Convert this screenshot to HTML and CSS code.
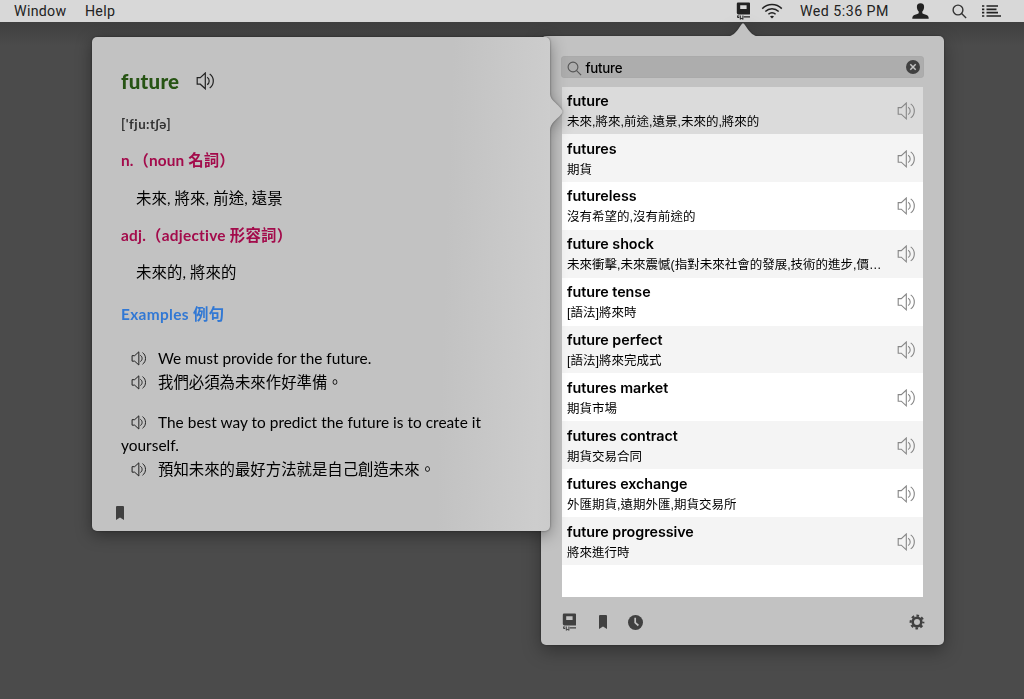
FILE: index.html
```html
<!DOCTYPE html>
<html lang="zh-Hant">
<head>
<meta charset="utf-8">
<title>Dictionary</title>
<link rel="stylesheet" href="styles.css">
</head>
<body>
<svg class="defs" aria-hidden="true">
  <symbol id="speaker" viewBox="0 0 18 18">
    <path d="M.7 5.600h3.100l5-4.600v15.800l-5-4.600H.7z"/>
    <path d="M10.600 5.200c2.800 1.500 2.800 5.900 0 7.400M13.200 1.900c4.800 3.200 4.800 10.800 0 14"/>
  </symbol>
  <symbol id="book" viewBox="0 0 15 18">
    <path fill-rule="evenodd" d="M2 .5h11a1 1 0 0 1 1 1V12a.6.6 0 0 1-.6.600H2.300A2 2 0 0 1 .8 11V1.700A1.200 1.200 0 0 1 2 .5zM4.200 3.300v3.800h6.400V3.300z"/>
    <path d="M1 13.400h2.200v1H1.800v.6h1.400v1H2A1.200 1.200 0 0 1 1 15zM3.800 13.400h1v3l.8-.6.8.6v-3h1v4H6.300l-.7-.6-.7.600h-1.100zM7.800 14.200H14v1.200H7.800z"/>
  </symbol>
  <symbol id="bookmark" viewBox="0 0 8 14">
    <path d="M1 0h6a1 1 0 0 1 1 1v13l-4-2.400L0 14V1a1 1 0 0 1 1-1z"/>
  </symbol>
  <symbol id="lens" viewBox="0 0 15 15">
    <circle cx="6" cy="6" r="4.900"/><path d="M9.600 9.600l4.500 4.500"/>
  </symbol>
</svg>

<header class="menubar">
  <nav class="menus"><span>Window</span><span>Help</span></nav>
  <div class="status">
    <svg class="m-book"><use href="#book"/></svg>
    <svg class="m-wifi" viewBox="0 0 22 16"><path d="M1.200 5.600c5.400-5.400 14.200-5.400 19.600 0M4.300 8.500c3.800-3.700 9.600-3.700 13.400 0M7.400 11.300c2.100-2 5.100-2 7.200 0"/><path class="dot" d="M11 15.600l-2-2.100c1.100-1 2.900-1 4 0z"/></svg>
    <span class="clock">Wed 5:36 PM</span>
    <svg class="m-user" viewBox="0 0 17 16"><path d="M8.500.3c2.500 0 3.800 1.600 3.600 4-.1 1.900-.9 3.400-1.800 4.300v1.700c1.600 1.100 4.200 1.200 5.500 2.500.8.800.9 1.900.9 2.900H.3c0-1 .1-2.100.9-2.900 1.300-1.300 3.900-1.400 5.500-2.500V8.600C5.800 7.700 5 6.200 4.900 4.300 4.700 1.900 6 .3 8.500.3z"/></svg>
    <svg class="m-lens"><use href="#lens"/></svg>
    <svg class="m-list" viewBox="0 0 19 12"><path d="M0 1h2.300M4.500 1H16M0 4.300h2.300M4.500 4.300H14.500M0 7.600h2.300M4.500 7.600H16M0 11h2.300M4.500 11H19"/></svg>
  </div>
</header>

<main class="desktop">
  <section class="popover results">
    <svg class="tip-up" viewBox="0 0 32 14"><path d="M0 14C6 13.500 8.500 10 11.500 6.200 13.400 3.500 14.800.7 16 .7s2.600 2.800 4.500 5.500C23.500 10 26 13.500 32 14z"/></svg>
    <div class="search">
      <svg class="s-lens"><use href="#lens"/></svg>
      <span class="query">future</span>
      <svg class="s-clear" viewBox="0 0 14 14"><circle cx="7" cy="7" r="7"/><path d="M4.300 4.300l5.400 5.400M9.700 4.300L4.300 9.700"/></svg>
    </div>
    <ul class="list">
      <li class="row selected"><div class="entry"><b>future</b><span>未來,將來,前途,遠景,未來的,將來的</span></div><svg class="say"><use href="#speaker"/></svg></li>
      <li class="row"><div class="entry"><b>futures</b><span>期貨</span></div><svg class="say"><use href="#speaker"/></svg></li>
      <li class="row"><div class="entry"><b>futureless</b><span>沒有希望的,沒有前途的</span></div><svg class="say"><use href="#speaker"/></svg></li>
      <li class="row"><div class="entry"><b>future shock</b><span>未來衝擊,未來震憾(指對未來社會的發展,技術的進步,價…</span></div><svg class="say"><use href="#speaker"/></svg></li>
      <li class="row"><div class="entry"><b>future tense</b><span>[語法]將來時</span></div><svg class="say"><use href="#speaker"/></svg></li>
      <li class="row"><div class="entry"><b>future perfect</b><span>[語法]將來完成式</span></div><svg class="say"><use href="#speaker"/></svg></li>
      <li class="row"><div class="entry"><b>futures market</b><span>期貨市場</span></div><svg class="say"><use href="#speaker"/></svg></li>
      <li class="row"><div class="entry"><b>futures contract</b><span>期貨交易合同</span></div><svg class="say"><use href="#speaker"/></svg></li>
      <li class="row"><div class="entry"><b>futures exchange</b><span>外匯期貨,遠期外匯,期貨交易所</span></div><svg class="say"><use href="#speaker"/></svg></li>
      <li class="row"><div class="entry"><b>future progressive</b><span>將來進行時</span></div><svg class="say"><use href="#speaker"/></svg></li>
    </ul>
    <footer class="tools">
      <svg class="t-book"><use href="#book"/></svg>
      <svg class="t-mark"><use href="#bookmark"/></svg>
      <svg class="t-clock" viewBox="0 0 14 14"><circle cx="7" cy="7" r="7"/><path d="M6.700 2.500v4.700l3 2.600"/></svg>
      <svg class="t-gear" viewBox="0 0 16 16"><circle class="teeth" cx="8" cy="8" r="6.300"/><circle class="ring" cx="8" cy="8" r="4.300"/></svg>
    </footer>
  </section>

  <section class="popover detail">
    <svg class="tip-right" viewBox="0 0 13 36"><path d="M0 0c.3 3 1.500 5 4 7.500C7.500 11 12.500 15 12.500 17.500S7.500 24 4 27.500C1.500 30 .3 32.500 0 36z"/></svg>
    <div class="head"><h1>future</h1><svg class="say-main"><use href="#speaker"/></svg></div>
    <p class="phonetic">['fju:tʃə]</p>
    <h2 class="noun">n.（noun 名詞）</h2>
    <p class="sense">未來, 將來, 前途, 遠景</p>
    <h2 class="adj">adj.（adjective 形容詞）</h2>
    <p class="sense">未來的, 將來的</p>
    <h3>Examples 例句</h3>
    <div class="example first">
      <p class="en en-a"><svg><use href="#speaker"/></svg>We must provide for the future.</p>
      <p class="zh"><svg><use href="#speaker"/></svg>我們必須為未來作好準備。</p>
    </div>
    <div class="example">
      <p class="en"><svg><use href="#speaker"/></svg>The best way to predict the future is to create it<br>yourself.</p>
      <p class="zh"><svg><use href="#speaker"/></svg>預知未來的最好方法就是自己創造未來。</p>
    </div>
    <svg class="d-mark"><use href="#bookmark"/></svg>
  </section>
</main>
</body>
</html>
```
FILE: styles.css
```css
* { box-sizing: border-box; }
body {
  margin: 0;
  height: 699px;
  overflow: hidden;
  display: flex;
  flex-direction: column;
  background: #4b4b4b;
  font-family: Inter, "Noto Sans CJK TC", sans-serif;
  color: #000;
}
h1, h2, h3, p, ul { margin: 0; padding: 0; }
svg { display: block; flex: none; }
.defs { position: absolute; width: 0; height: 0; }

/* menu bar */
.menubar {
  height: 22px;
  flex: none;
  display: flex;
  justify-content: space-between;
  align-items: center;
  padding: 0 23px 0 14px;
  background: #d8d8d8;
  font: 14.200px/22px Roboto, sans-serif;
  letter-spacing: .3px;
  color: #222;
}
.menus { display: flex; gap: 18.500px; }
.status { display: flex; align-items: center; }
.m-book { width: 15px; height: 18px; margin-right: -.5px; fill: #222; }
.m-wifi { width: 22px; height: 16px; margin-left: 11px; fill: none; stroke: #222; stroke-width: 1.5; }
.m-wifi .dot { fill: #222; stroke: none; }
.clock { margin-left: 17px; width: 89px; white-space: nowrap; letter-spacing: .48px; }
.m-user { width: 17px; height: 16px; margin-left: 23px; fill: #222; }
.m-lens { width: 15px; height: 15px; margin-left: 22.500px; margin-right: -.5px; fill: none; stroke: #333; stroke-width: 1.4; }
.m-list { width: 19px; height: 12px; margin-left: 16px; stroke: #222; stroke-width: 1.7; }

/* desktop and popovers */
.desktop {
  position: relative;
  flex: 1;
  background: linear-gradient(#3f3f3f, #4b4b4b 24px);
}
.popover {
  position: absolute;
  display: flex;
  flex-direction: column;
  background: #c2c2c2;
  border-radius: 5px;
}
.results {
  left: 541px;
  top: 14px;
  width: 403px;
  height: 609px;
  padding: 20px 20px 0;
  filter: drop-shadow(0 0 1px rgba(0,0,0,.35)) drop-shadow(0 6px 9px rgba(0,0,0,.32));
}
.tip-up { position: absolute; left: 186px; top: -14px; width: 32px; height: 15px; fill: #c2c2c2; }
.search {
  height: 22px;
  flex: none;
  display: flex;
  align-items: center;
  padding: 0 4px 0 6px;
  border-radius: 4px;
  background: #adadad;
  box-shadow: inset 0 0 1px rgba(0,0,0,.12);
}
.s-lens { width: 15px; height: 15px; margin-top: 2px; fill: none; stroke: #555; stroke-width: 1.1; }
.query { margin-left: 3.500px; flex: 1; font-size: 13.300px; line-height: 22px; font-weight: 500; letter-spacing: -.25px; padding-top: 1px; }
.s-clear { width: 14px; height: 14px; fill: #404040; stroke: none; }
.s-clear path { stroke: #c4c4c4; stroke-width: 1.500; }
.list {
  margin: 9px 0 0 1px;
  width: 361px;
  height: 510px;
  flex: none;
  list-style: none;
  background: #fff;
}
.row {
  height: 47.880px;
  display: flex;
  align-items: center;
  justify-content: space-between;
  padding: 1px 7px 0 5px;
}
.row:nth-child(even) { background: #f4f4f4; }
.row.selected { height: 47.100px; background: #dbdbdb; }
.entry { display: flex; flex-direction: column; white-space: nowrap; }
.entry b { font-size: 14.300px; line-height: 22px; font-weight: 600; letter-spacing: -.03px; }
.entry span {
  font: 12.500px/20px "Liberation Sans", "Noto Sans CJK TC", sans-serif;
}
.say { width: 19px; height: 18px; fill: none; stroke: #868686; stroke-width: 1.1; }
.tools { flex: 1; display: flex; align-items: center; padding-top: 2px; }
.tools svg { fill: #404040; }
.t-book { width: 15px; height: 18px; margin-left: 1px; }
.t-mark { width: 8px; height: 14px; margin-left: 22px; }
.t-clock { width: 15px; height: 15px; margin-left: 21px; }
.t-clock path { fill: none; stroke: #c2c2c2; stroke-width: 1.600; }
.t-gear { width: 16px; height: 16px; margin-left: auto; margin-right: -1px; }
.t-gear circle { fill: none; stroke: #404040; }
.t-gear .teeth { stroke-width: 2.200; stroke-dasharray: 2.600 2.348; stroke-dashoffset: 1.300; }
.t-gear .ring { stroke-width: 2.600; }

/* definition popover */
.detail {
  left: 92px;
  top: 15px;
  width: 458px;
  height: 494px;
  padding: 31px 28px 0 29px;
  background: linear-gradient(92deg, #c2c2c2 76%, #cdcdcd 97%, #cbcbcb);
  filter: drop-shadow(0 0 1px rgba(0,0,0,.4)) drop-shadow(0 4px 8px rgba(0,0,0,.38));
  font: 15.400px/23px Lato, "Noto Sans CJK TC", sans-serif;
}
.tip-right { position: absolute; left: 458px; top: 57px; width: 13px; height: 36px; fill: #cacaca; }
.head { display: flex; align-items: center; height: 25px; }
.head h1 { font-size: 20.500px; font-weight: 900; line-height: 25px; color: #275414; width: 75px; padding-top: 1px; letter-spacing: .25px; }
.say-main { width: 19px; height: 18px; fill: none; stroke: #222; stroke-width: 1.2; }
.phonetic { margin-top: 20px; font-size: 13.300px; font-weight: 700; line-height: 23px; color: #333; letter-spacing: .5px; }
.detail h2 { font-size: 15.400px; line-height: 23px; font-weight: 700; color: #a30b4b; }
.noun { margin-top: 13px; letter-spacing: .1px; }
.adj { margin-top: 14px; letter-spacing: .25px; }
.sense { margin: 14px 0 0 15px; letter-spacing: .1px; }
.noun + .sense { margin-top: 15px; }
.detail h3 { margin-top: 19px; font-size: 15.400px; line-height: 23px; font-weight: 700; color: #3178d4; letter-spacing: .35px; }
.example { margin-top: 16px; }
.example.first { margin-top: 21px; }
.example svg { display: inline-block; width: 16px; height: 15px; margin: 0 11.500px 0 9.500px; vertical-align: -2px; fill: none; stroke: #222; stroke-width: 1.200; }
.en { letter-spacing: .03px; white-space: nowrap; }
.en-a { letter-spacing: -.01px; }
.zh { line-height: 25px; white-space: nowrap; }
.d-mark { width: 8px; height: 14px; margin: 24px 0 0 -5px; fill: #404040; }
```
